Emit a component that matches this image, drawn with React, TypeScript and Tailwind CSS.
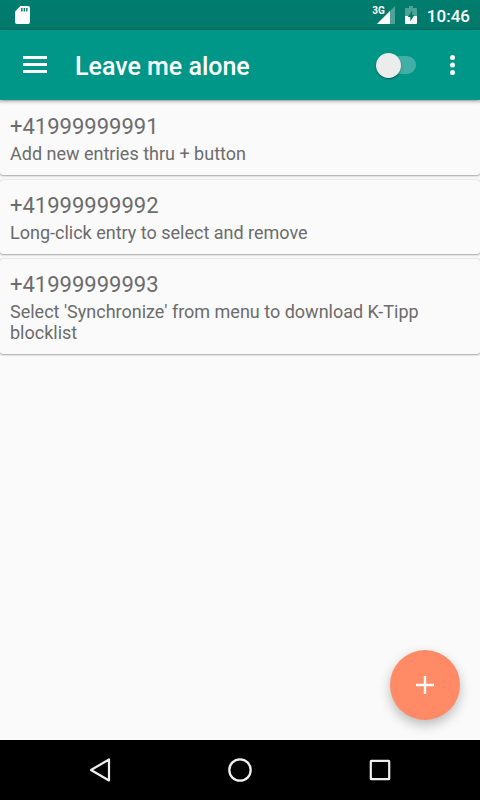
import { useState } from 'react'

const entries = [
  { number: '+41999999991', note: 'Add new entries thru + button' },
  { number: '+41999999992', note: 'Long-click entry to select and remove' },
  { number: '+41999999993', note: "Select 'Synchronize' from menu to download K-Tipp blocklist" },
]

function StatusBar() {
  return (
    <div className="flex h-[30px] items-center bg-gradient-to-b from-[#007d6e] to-[#00796b] pr-2.5 pl-[15px] text-white">
      <svg className="h-[18px] w-[15px]" viewBox="0 0 15 18" fill="none">
        <path d="M5.5 0H13a2 2 0 0 1 2 2v14a2 2 0 0 1-2 2H2a2 2 0 0 1-2-2V5.5z" fill="#fff" />
        <path d="M6.8 2v3.5M9.3 2v3.5M11.8 2v3.5" stroke="#007a6c" strokeWidth="1.4" />
      </svg>

      <div className="ml-auto flex items-center">
        <div className="relative mr-2.5 h-[18px] w-[22px]">
          <svg className="h-[18px] w-[22px]" viewBox="0 0 22 18">
            <path d="M22 0v18H4z" fill="#fff" fillOpacity="0.3" />
            <path d="M17 5v13H4z" fill="#fff" />
          </svg>
          <span className="absolute -top-px right-2.5 text-[10px] leading-3 font-bold">3G</span>
        </div>
        <svg className="mr-2.5 h-[18px] w-3" viewBox="0 0 12 18">
          <path d="M4 0h4v2h3a1 1 0 0 1 1 1v7H0V3a1 1 0 0 1 1-1h3z" fill="#fff" fillOpacity="0.3" />
          <path d="M0 10h12v7a1 1 0 0 1-1 1H1a1 1 0 0 1-1-1z" fill="#fff" />
          <path d="M7.2 4.5 2.8 11H5.3V15.5L9.4 9H7.2z" fill="#00796b" />
        </svg>
        <span className="pt-0.5 text-[17px] leading-5 font-medium">10:46</span>
      </div>
    </div>
  )
}

function NavBar() {
  return (
    <nav className="flex h-[60px] shrink-0 items-center justify-center gap-[100px] bg-black">
      <button aria-label="Back" className="h-10 w-10">
        <svg viewBox="0 0 40 40" fill="none" stroke="#eee" strokeWidth="2.2" strokeLinejoin="round">
          <path d="M29 9.5v21L11 20z" />
        </svg>
      </button>
      <button aria-label="Home" className="h-10 w-10">
        <svg viewBox="0 0 40 40" fill="none" stroke="#eee" strokeWidth="2.3">
          <circle cx="20" cy="20" r="10.7" />
        </svg>
      </button>
      <button aria-label="Recent apps" className="h-10 w-10">
        <svg viewBox="0 0 40 40" fill="none" stroke="#eee" strokeWidth="2.2" strokeLinejoin="round">
          <rect x="10.8" y="10.8" width="18.4" height="18.4" rx="0.5" />
        </svg>
      </button>
    </nav>
  )
}

export default function App() {
  const [enabled, setEnabled] = useState(false)

  return (
    <div className="relative flex min-h-screen flex-col bg-[#fafafa] font-[Roboto,sans-serif]">
      <StatusBar />

      <header className="relative z-10 flex h-[70px] items-center bg-[#009688] pr-4 pl-5 text-white shadow-[0_1px_4px_rgba(0,0,0,0.4)]">
        <button aria-label="Open menu" className="h-[30px] w-[30px]">
          <svg viewBox="0 0 30 30" fill="#fff">
            <path d="M3 6h24v3H3zM3 13h24v3H3zM3 20h24v3H3z" />
          </svg>
        </button>
        <h1 className="ml-[25px] pt-1 text-[25px] leading-8 font-medium">Leave me alone</h1>

        <label className="relative ml-auto flex h-[26px] w-[42px] cursor-pointer items-center">
          <input
            type="checkbox"
            role="switch"
            aria-label="Block calls"
            className="peer sr-only"
            checked={enabled}
            onChange={(e) => setEnabled(e.target.checked)}
          />
          <span className="ml-1 h-[18px] w-9 rounded-full bg-white/25" />
          <span className="absolute left-0 h-[25px] w-[25px] rounded-full bg-[#ececec] shadow-[0_1px_2px_rgba(0,0,0,0.4)] peer-checked:left-4" />
        </label>

        <button aria-label="More options" className="ml-6 h-[30px] w-[22px]">
          <svg className="h-[30px] w-[22px]" viewBox="0 0 22 30" fill="#fff">
            <circle cx="10.5" cy="7.5" r="2.5" />
            <circle cx="10.5" cy="15" r="2.5" />
            <circle cx="10.5" cy="22.5" r="2.5" />
          </svg>
        </button>
      </header>

      <main className="flex-1">
        <ul className="flex flex-col gap-[5px] pt-px">
          {entries.map((entry) => (
            <li
              key={entry.number}
              className="rounded-[3px] bg-[#fafafa] px-2.5 pt-2.5 pb-[11px] text-[#6c6c6c] shadow-[0_0_2px_rgba(0,0,0,0.2),0_1px_2px_rgba(0,0,0,0.3)]"
            >
              <h2 className="text-[22px] leading-8">{entry.number}</h2>
              <p className="text-[18px] leading-[21px]">{entry.note}</p>
            </li>
          ))}
        </ul>
      </main>

      <button
        aria-label="Add entry"
        className="absolute right-5 bottom-20 flex h-[70px] w-[70px] items-center justify-center rounded-full bg-[#ff8a65] shadow-[0_5px_12px_rgba(0,0,0,0.25)]"
      >
        <svg className="h-[30px] w-[30px]" viewBox="0 0 30 30" fill="none" stroke="#fff" strokeWidth="2.4">
          <path d="M15 6v18M6 15h18" />
        </svg>
      </button>

      <NavBar />
    </div>
  )
}
